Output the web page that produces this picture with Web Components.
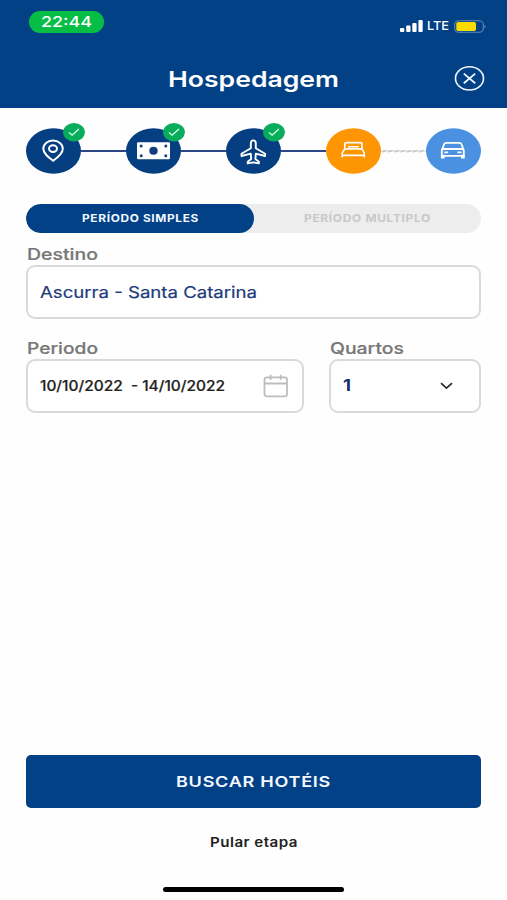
<!DOCTYPE html>
<html lang="pt-BR">
<head>
<meta charset="utf-8">
<title>Hospedagem</title>
<style>
html,body{margin:0;height:100%;background:#fefefe}
body{font-family:Inter,"Liberation Sans",sans-serif}
</style>
</head>
<body>
<hotel-page></hotel-page>
<script>
const define = (name, html, init) => {
  const tpl = document.createElement('template');
  tpl.innerHTML = html;
  customElements.define(name, class extends HTMLElement {
    constructor() {
      super();
      this.attachShadow({mode: 'open'}).append(tpl.content.cloneNode(true));
    }
    connectedCallback() { if (init) init(this, this.shadowRoot); }
  });
};

/* One line of text stretched to a given width. */
define('fit-text', `<style>
:host{display:block;flex:none;line-height:20px;height:20px;white-space:pre;text-align:left}
span{display:inline-block;transform-origin:0 50%}
</style><span></span>`, (el, root) => {
  const span = root.querySelector('span');
  span.textContent = el.getAttribute('text');
  const w = +el.getAttribute('w');
  el.style.width = w + 'px';
  span.style.transform = 'none';
  const natural = span.getBoundingClientRect().width;
  span.style.transform = 'scaleX(' + w / natural + ')';
});

define('status-bar', `<style>
:host{display:flex;height:44px;color:#fff;padding:0 20px 0 29px;box-sizing:border-box;justify-content:space-between}
.time{margin-top:11px;width:75px;height:22px;border-radius:11px;background:#06bd45;display:flex;align-items:center;justify-content:center;font-size:15px;font-weight:500}
.right{display:flex;align-items:center;height:20px;margin-top:16px;font-size:12px;font-weight:500}
svg{display:block}
.bars{margin-right:4px}
.bat{margin-left:5px}
</style>
<div class="time"><fit-text text="22:44" w="51"></fit-text></div>
<div class="right">
<svg class="bars" width="23" height="12" fill="#fff"><rect y="8" width="4.3" height="4" rx="1"/><rect x="6.2" y="5.5" width="4.3" height="6.5" rx="1"/><rect x="12.3" y="3" width="4.3" height="9" rx="1"/><rect x="18.4" width="4.3" height="12" rx="1"/></svg>
<fit-text text="LTE" w="22"></fit-text>
<svg class="bat" width="33" height="13"><rect x=".7" y=".7" width="28.6" height="11.6" rx="3.8" fill="none" stroke="#6787b0" stroke-width="1.1"/><rect x="2.3" y="2" width="19.7" height="9" rx="1.8" fill="#fddc00"/><path d="M30.5 4.7q2.2 1.8 0 3.6z" fill="#7f9cc0"/></svg>
</div>`);

define('page-header', `<style>
:host{display:block;height:108px;background:#024186;color:#fff}
.title{display:grid;grid-template-columns:1fr auto 1fr;align-items:center;height:69px;padding:0 22px 0 21px;font-size:22px;font-weight:600}
svg{justify-self:end;display:block}
</style>
<status-bar></status-bar>
<div class="title"><i></i><fit-text text="Hospedagem" w="171"></fit-text>
<svg width="31" height="26" viewBox="0 0 31 26" fill="none" stroke="#f2f7ff" stroke-width="1.6"><ellipse cx="15.5" cy="12.4" rx="14" ry="11.6"/><path d="M9.8 7.6l11.4 9.6M21.2 7.6L9.8 17.2" stroke-width="1.8"/></svg>
</div>`);

const glyphs = {
  pin: '<g fill="none" stroke="#fff"><path stroke-width="2" d="M27.2 32.8C22 29 17.3 25.4 17.3 20.8c0-4.8 4.2-8.2 9.7-8.2s9.8 3.4 9.8 8.2c0 4.6-4.4 8.2-9.6 12z"/><ellipse cx="27" cy="20.6" rx="4" ry="3.3" stroke-width="2"/></g>',
  cash: '<rect x="11" y="14.3" width="33" height="17" rx="1.2" fill="#fff"/><g fill="#133d80"><ellipse cx="27.5" cy="22.8" rx="4.2" ry="4"/><circle cx="15.2" cy="18" r="1.5"/><circle cx="39.8" cy="18" r="1.5"/><circle cx="15.2" cy="27.7" r="1.5"/><circle cx="39.8" cy="27.7" r="1.5"/></g>',
  plane: '<path fill="none" stroke="#fff" stroke-width="1.9" stroke-linejoin="round" d="M27.3 12.4c-1.7 0-2.5 1.5-2.5 3.2v4.7L15.5 25.8V28l9.3-2.3.4 5.4-3.5 2.6v1.7l5.6-1 5.6 1v-1.7l-3.5-2.6.4-5.4 9.3 2.3v-2.2l-9.3-5.5v-4.7c0-1.7-.8-3.2-2.5-3.2z"/>',
  bed: '<path fill="none" stroke="#fff" stroke-width="1.6" stroke-linejoin="round" d="M18.8 20.6v-4.5q0-1.5 1.8-1.5h13.6q1.8 0 1.8 1.5v4.5M22 18.7h10.8M18.8 20.9H36l2.3 4.3v4.3M18.8 20.9l-2.6 4.3v4.3M16.2 27.4h22.1"/>',
  car: '<path fill="none" stroke="#fff" stroke-width="1.8" stroke-linejoin="round" d="M15.8 22.4l2.3-6.2q.5-1.4 2.2-1.4h13q1.7 0 2.2 1.4l2.3 6.2v5.4h-22zM17 21h19.6"/><path fill="#fff" d="M14.9 26.8h3.7v3.8h-3.7zM35 26.8h3.7v3.8H35z"/><path d="M18.2 24.4h4M31.4 24.4h4" stroke="#fff" stroke-width="1.8"/>'
};

define('step-dot', `<style>
:host{display:block;position:relative;flex:none;width:55px;height:46px}
svg{display:block}
.badge{position:absolute;left:37px;top:-5px}
:host(:not([done])) .badge{display:none}
</style>
<svg class="main" width="55" height="46" viewBox="0 0 55 46"><ellipse cx="27.5" cy="23" rx="27.5" ry="22.8"/><g></g></svg>
<svg class="badge" width="22" height="19" viewBox="0 0 22 19"><ellipse cx="11" cy="9.3" rx="10.9" ry="9.2" fill="#08ad5b"/><path d="M6 9.6l3.1 2.6L16 6" fill="none" stroke="#d8ffea" stroke-width="1.3"/></svg>`, (el, root) => {
  root.querySelector('ellipse').setAttribute('fill', el.getAttribute('color'));
  root.querySelector('g').innerHTML = glyphs[el.getAttribute('icon')];
});

define('step-track', `<style>
:host{display:flex;align-items:center;margin-top:20px}
i{flex:1;height:2px;background:#2c4688}
svg{flex:1;display:block;width:45px;height:4px}
</style>
<step-dot icon="pin" color="#063e82" done></step-dot><i></i>
<step-dot icon="cash" color="#063e82" done></step-dot><i></i>
<step-dot icon="plane" color="#063e82" done></step-dot><i></i>
<step-dot icon="bed" color="#fe9604"></step-dot>
<svg viewBox="0 0 45 4"><path d="M0 2h45" stroke="#e2e2e2" stroke-width="1.6"/><path d="M1 3l4.5-1.6M7.2 3l4.5-1.6M13.4 3l4.5-1.6M19.6 3l4.5-1.6M25.8 3l4.5-1.6M32 3l4.5-1.6M38.2 3l4.5-1.6" stroke="#c6c6c6" stroke-width="1.5"/></svg>
<step-dot icon="car" color="#4b91e1"></step-dot>`);

define('period-toggle', `<style>
:host{display:grid;grid-template-columns:1fr 1fr;height:29px;margin-top:30px;border-radius:15px;background:#ededed;font-size:10.5px;font-weight:700;letter-spacing:.6px;overflow:hidden}
div{display:flex;align-items:center;justify-content:center;border-radius:15px;color:#c8c8c8;padding-left:1px}
.on{background:#024186;color:#f4f8ff}
</style>
<div class="on"><fit-text text="PERÍODO SIMPLES" w="117"></fit-text></div>
<div><fit-text text="PERÍODO MULTIPLO" w="127"></fit-text></div>`);

define('form-field', `<style>
:host{display:block}
.label{height:32px;display:flex;align-items:center;box-sizing:border-box;padding:9px 0 0 .5px;font-size:16px;font-weight:500;color:#777;-webkit-text-stroke:.2px}
.box{display:flex;align-items:center;height:54px;box-sizing:border-box;border:2px solid #dadada;border-radius:9px;padding:0 11px 0 12px;background:#fff}
</style>
<div class="label"></div><div class="box"><slot></slot></div>`, (el, root) => {
  const t = document.createElement('fit-text');
  t.setAttribute('text', el.getAttribute('label'));
  t.setAttribute('w', el.getAttribute('lw'));
  root.querySelector('.label').replaceChildren(t);
});

define('hotel-page', `<style>
:host{display:flex;flex-direction:column;height:900px;width:507px;overflow:hidden}
main{flex:1;display:flex;flex-direction:column;padding:0 26px}
.row{display:grid;grid-template-columns:278px 152px;justify-content:space-between;margin-top:8px}
.city{font-size:16px;font-weight:400;color:#213b7b;-webkit-text-stroke:.2px}
.date{font-size:14px;font-weight:500;color:#222;-webkit-text-stroke:.2px}
.num{font-size:15.5px;font-weight:700;color:#15306f}
.cal{margin-left:auto;margin-right:2px}
.chev{margin-left:auto;margin-right:15px}
button{margin:auto 0 0;flex:none;height:53px;border:0;border-radius:5px;background:#024186;color:#f5f9ff;font:600 15px Inter,sans-serif;letter-spacing:.6px;display:flex;align-items:center;justify-content:center;padding:0}
.skip{flex:none;display:flex;justify-content:center;height:20px;margin-top:24px;padding-left:1px;font-size:13px;font-weight:600;color:#222;letter-spacing:.4px}
.home{flex:none;width:181px;height:5px;border-radius:3px;background:#000;align-self:center;margin:35px 0 8px}
</style>
<page-header></page-header>
<main>
<step-track></step-track>
<period-toggle></period-toggle>
<form-field label="Destino" lw="71"><fit-text class="city" text="Ascurra - Santa Catarina" w="217"></fit-text></form-field>
<div class="row">
<form-field label="Periodo" lw="71"><fit-text class="date" text="10/10/2022  - 14/10/2022" w="185"></fit-text>
<svg class="cal" width="26" height="24" viewBox="0 0 26 24" fill="none" stroke="#bdbdbd" stroke-width="1.8"><rect x="1.5" y="3.4" width="22.5" height="19" rx="2.4"/><path d="M1.5 9.5H24M7.6.8v5M17.7.8v5"/></svg></form-field>
<form-field label="Quartos" lw="74"><fit-text class="num" text="1" w="8"></fit-text>
<svg class="chev" width="13" height="8" viewBox="0 0 13 8" fill="none" stroke="#2b2b2b" stroke-width="1.7"><path d="M1 1.2l5.5 5 5.5-5"/></svg></form-field>
</div>
<button><fit-text text="BUSCAR HOTÉIS" w="155"></fit-text></button>
<div class="skip"><fit-text text="Pular etapa" w="88"></fit-text></div>
<div class="home"></div>
</main>`);
</script>
</body>
</html>
